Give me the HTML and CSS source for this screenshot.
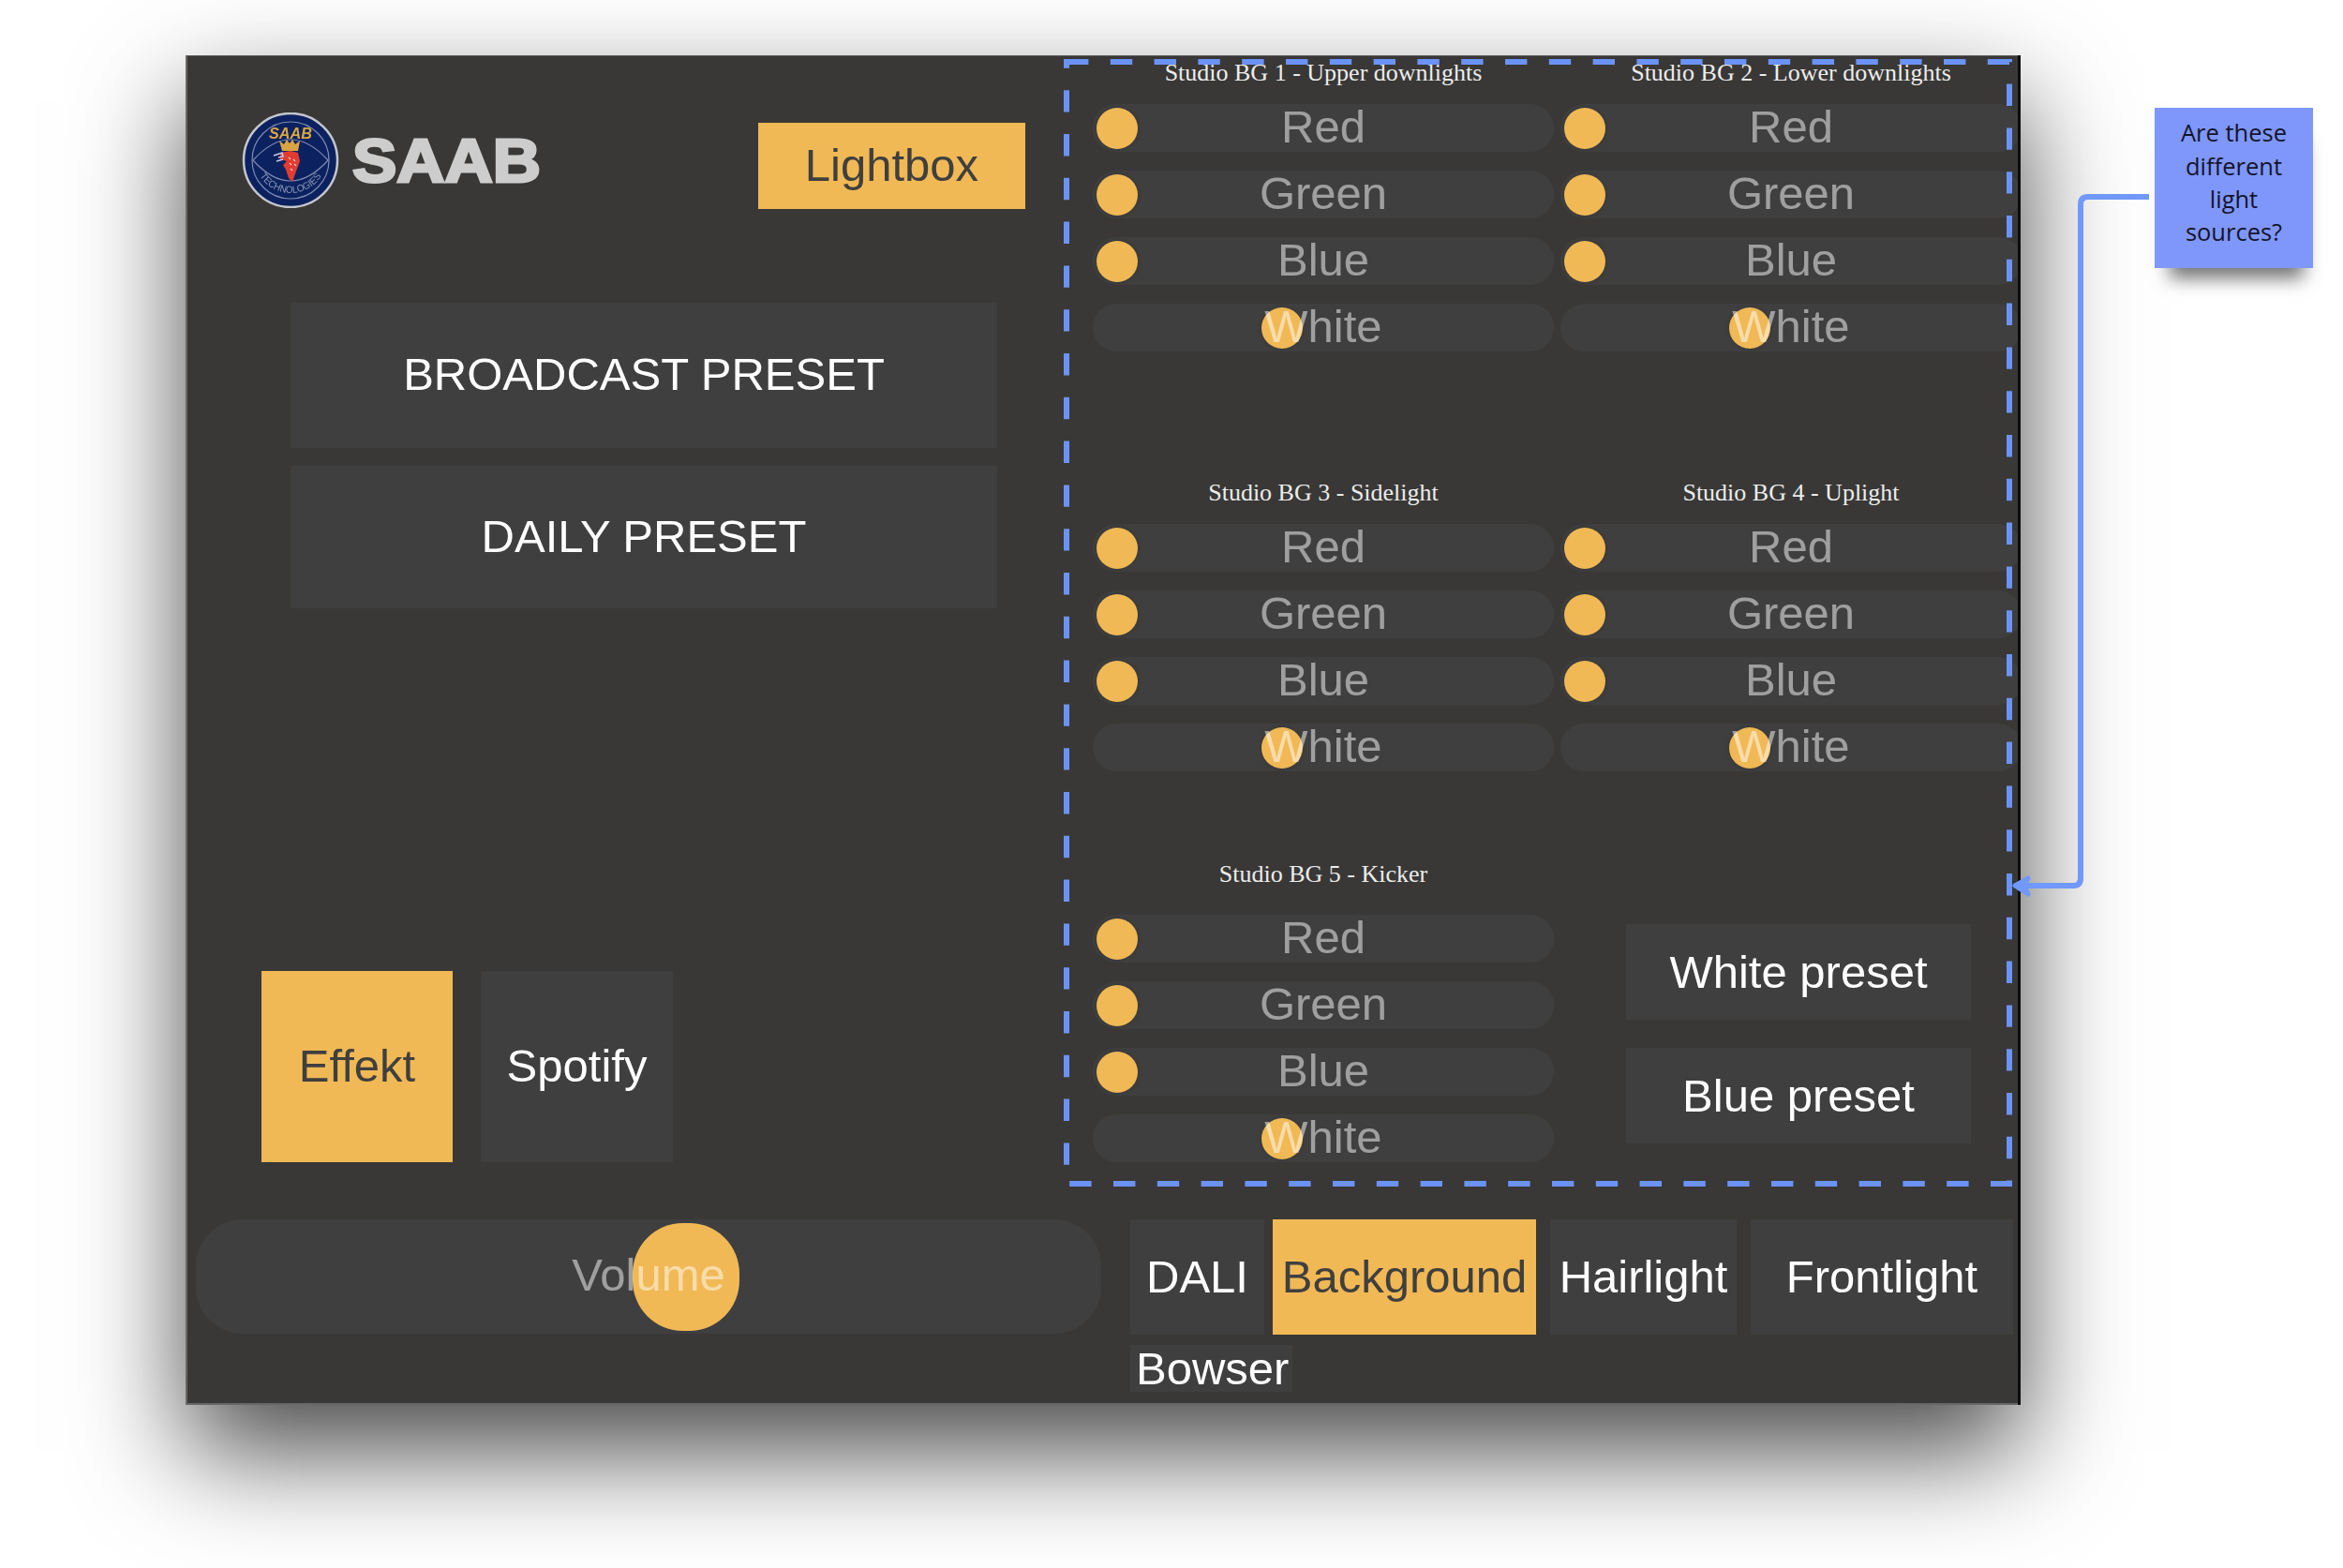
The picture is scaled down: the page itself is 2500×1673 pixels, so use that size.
FILE: index.html
```html
<!DOCTYPE html>
<html lang="en">
<head>
<meta charset="utf-8">
<title>Lightbox control panel</title>
<link rel="stylesheet" href="styles.css">
</head>
<body>
<main class="page">
  <section class="panel">
    <div class="main">
      <div class="left">
        <div class="brand">
          <svg class="logo" viewBox="0 0 320 102" role="img" aria-label="SAAB">
            <defs>
              <path id="arc-bottom" d="M18 66 A39 39 0 0 0 86 66"/>
            </defs>
            <circle cx="52" cy="51" r="50" fill="#0c2260" stroke="#c4c6cc" stroke-width="2.5"/>
            <circle cx="52" cy="51" r="41" fill="none" stroke="#7f8bb0" stroke-width="1.2"/>
            <path d="M12 51 Q52 7 92 51 Q52 95 12 51Z" fill="none" stroke="#7f8bb0" stroke-width="1.2"/>
            <text class="logo-badge" x="52" y="28" text-anchor="middle" textLength="46" lengthAdjust="spacingAndGlyphs">SAAB</text>
            <path d="M40 30 L45 34 L48 29 L51 33 L54 29 L57 34 L62 30 L60 41 L43 41Z" fill="#d9a441"/>
            <path d="M41 43 L52 41 L60 43 L62 52 L59 60 L54 74 L50 70 L47 61 L44 56 L48 52 L41 50Z" fill="#e23b32"/>
            <path d="M34 46 L43 43 L44 47 L39 48 M37 52 L44 50" fill="none" stroke="#c3cbe4" stroke-width="1.6"/>
            <path d="M50 48 l2 2 M55 50 l2 2 M51 54 l2 2 M56 55 l2 2 M52 60 l2 2" stroke="#f5c9c4" stroke-width="1.2"/>
            <text class="logo-tech"><textPath href="#arc-bottom" startOffset="50%" text-anchor="middle" textLength="78" lengthAdjust="spacingAndGlyphs">TECHNOLOGIES</textPath></text>
            <text class="logo-word" x="118" y="74" textLength="201" lengthAdjust="spacingAndGlyphs">SAAB</text>
          </svg>
          <button class="btn btn-active lightbox">Lightbox</button>
        </div>
        <div class="presets">
          <button class="btn preset-broadcast">BROADCAST PRESET</button>
          <button class="btn preset-daily">DAILY PRESET</button>
        </div>
        <div class="modes">
          <button class="btn btn-active mode">Effekt</button>
          <button class="btn mode mode-wide">Spotify</button>
        </div>
      </div>

      <div class="fixtures">
        <div class="group">
          <h2 class="group-title">Studio BG 1 - Upper downlights</h2>
          <div class="rows">
            <div class="slider"><span class="knob"></span><span class="label">Red</span></div>
            <div class="slider"><span class="knob"></span><span class="label">Green</span></div>
            <div class="slider"><span class="knob"></span><span class="label">Blue</span></div>
            <div class="slider"><span class="knob knob-mid"></span><span class="label">White</span></div>
          </div>
        </div>
        <div class="group">
          <h2 class="group-title">Studio BG 2 - Lower downlights</h2>
          <div class="rows">
            <div class="slider"><span class="knob"></span><span class="label">Red</span></div>
            <div class="slider"><span class="knob"></span><span class="label">Green</span></div>
            <div class="slider"><span class="knob"></span><span class="label">Blue</span></div>
            <div class="slider"><span class="knob knob-mid"></span><span class="label">White</span></div>
          </div>
        </div>
        <div class="group">
          <h2 class="group-title">Studio BG 3 - Sidelight</h2>
          <div class="rows">
            <div class="slider"><span class="knob"></span><span class="label">Red</span></div>
            <div class="slider"><span class="knob"></span><span class="label">Green</span></div>
            <div class="slider"><span class="knob"></span><span class="label">Blue</span></div>
            <div class="slider"><span class="knob knob-mid"></span><span class="label">White</span></div>
          </div>
        </div>
        <div class="group">
          <h2 class="group-title">Studio BG 4 - Uplight</h2>
          <div class="rows">
            <div class="slider"><span class="knob"></span><span class="label">Red</span></div>
            <div class="slider"><span class="knob"></span><span class="label">Green</span></div>
            <div class="slider"><span class="knob"></span><span class="label">Blue</span></div>
            <div class="slider"><span class="knob knob-mid"></span><span class="label">White</span></div>
          </div>
        </div>
        <div class="group">
          <h2 class="group-title group-title-tall">Studio BG 5 - Kicker</h2>
          <div class="rows">
            <div class="slider"><span class="knob"></span><span class="label">Red</span></div>
            <div class="slider"><span class="knob"></span><span class="label">Green</span></div>
            <div class="slider"><span class="knob"></span><span class="label">Blue</span></div>
            <div class="slider"><span class="knob knob-mid"></span><span class="label">White</span></div>
          </div>
        </div>
        <div class="color-presets">
          <button class="btn color-preset">White preset</button>
          <button class="btn color-preset">Blue preset</button>
        </div>
      </div>
    </div>

    <div class="bottom">
      <div class="volume"><span class="volume-knob"></span><span class="label label-volume">Volume</span></div>
      <div class="tabs-wrap">
        <div class="tabs">
          <button class="btn tab tab-dali">DALI</button>
          <button class="btn btn-active tab tab-background">Background</button>
          <button class="btn tab tab-hairlight">Hairlight</button>
          <button class="btn tab tab-frontlight">Frontlight</button>
        </div>
        <button class="btn bowser">Bowser</button>
      </div>
    </div>
  </section>

  <svg class="annotations" viewBox="0 0 2500 1673" aria-hidden="true">
    <rect class="dash-box" x="1138" y="66" width="1006" height="1197"/>
    <path class="connector" d="M2293 210 H2228 Q2220 210 2220 218 V937 Q2220 945 2212 945 H2152"/>
    <path class="connector-head" d="M2164 937 L2150 945 L2164 954 L2160 945Z"/>
  </svg>

  <aside class="note">Are these different light sources?</aside>
</main>
</body>
</html>
```
FILE: styles.css
```css
* { box-sizing: border-box; }
html, body { margin: 0; background: #fff; }

.page {
  position: relative;
  width: 2500px;
  height: 1673px;
  padding: 59px 0 0 198px;
  overflow: hidden;
  font-family: "Liberation Sans", Arial, sans-serif;
}

.panel {
  width: 1958px;
  height: 1440px;
  background: #393836;
  border-right: 3px solid #0d0d0d;
  box-shadow:
    inset 2px 0 0 #666,
    inset 0 -2px 0 #666,
    inset 0 1px 0 #5a5a5a,
    0 50px 108px rgba(0, 0, 0, 0.71);
  overflow: hidden;
}

.main { display: flex; height: 1242px; }

.left { width: 968px; flex: none; }

.brand {
  display: flex;
  align-items: flex-start;
  gap: 231px;
  padding: 61px 0 0 60px;
}
.logo { width: 320px; height: 102px; flex: none; filter: blur(0.5px); }
.logo-badge { font: italic bold 17px "Liberation Sans", sans-serif; fill: #dba63f; }
.logo-tech { font: 10.5px "Liberation Sans", sans-serif; fill: #8a98b8; }
.logo-word {
  font: bold 65px "Liberation Sans", sans-serif;
  fill: #cdcdcd;
  stroke: #cdcdcd;
  stroke-width: 3px;
}

.btn {
  display: block;
  margin: 0;
  padding: 0;
  border: 0;
  border-radius: 0;
  background: #3f3f3f;
  color: #fff;
  font: 49px/1 "Liberation Sans", Arial, sans-serif;
  text-align: center;
}
.btn-active { background: #f0b955; color: #3f3f3f; }

.lightbox { width: 285px; height: 92px; margin-top: 11px; padding-bottom: 2px; flex: none; }

.presets {
  display: flex;
  flex-direction: column;
  gap: 19px;
  width: 754px;
  margin: 100px 0 0 112px;
}
.preset-broadcast { height: 155px; padding-bottom: 3px; }
.preset-daily { height: 152px; padding-bottom: 2px; }

.modes { display: flex; gap: 30px; margin: 387px 0 0 81px; }
.mode { width: 204px; height: 204px; padding-bottom: 2px; }
.mode-wide { width: 205px; }

.fixtures {
  display: grid;
  grid-template-columns: 492px 492px;
  grid-template-rows: 448px 407px 1fr;
  column-gap: 7px;
  width: 991px;
  flex: none;
  padding-top: 5px;
}

.group-title {
  height: 47px;
  margin: 0;
  color: #ececec;
  font: normal 26px/28px "Liberation Serif", "Times New Roman", serif;
  text-align: center;
}
.group-title-tall { height: 57px; }

.rows { display: flex; flex-direction: column; gap: 20px; }

.slider {
  position: relative;
  display: flex;
  align-items: center;
  justify-content: center;
  height: 51px;
  border-radius: 25px;
  background: #3f3f3f;
}

.label {
  position: relative;
  margin-bottom: 3px;
  color: rgba(255, 255, 255, 0.5);
  font-size: 49px;
  line-height: 1;
}
.label-volume { margin-bottom: 4px; }

.knob {
  position: absolute;
  top: 4px;
  left: 4px;
  width: 44px;
  height: 44px;
  border-radius: 50%;
  background: #f0b955;
  box-shadow: 0 0 4px rgba(0, 0, 0, 0.18);
}
.knob-mid { left: 180px; }

.color-presets {
  display: flex;
  flex-direction: column;
  gap: 30px;
  width: 368px;
  margin: 67px 0 0 70px;
}
.color-preset { height: 102px; }

.bottom { display: flex; align-items: flex-start; padding-left: 11px; }

.volume {
  position: relative;
  display: flex;
  align-items: center;
  justify-content: center;
  width: 966px;
  height: 122px;
  flex: none;
  border-radius: 50px;
  background: #3f3f3f;
}
.volume-knob {
  position: absolute;
  top: 4px;
  left: 466px;
  width: 114px;
  height: 115px;
  border-radius: 47%;
  background: #f0b955;
}

.tabs-wrap { margin-left: 31px; }
.tabs { display: flex; height: 123px; }
.tab { height: 123px; flex: none; }
.tab-dali { width: 143px; margin-right: 9px; }
.tab-background { width: 281px; margin-right: 15px; }
.tab-hairlight { width: 199px; margin-right: 15px; }
.tab-frontlight { width: 280px; }

.bowser {
  width: 173px;
  height: 50px;
  margin-top: 11px;
  padding-left: 6px;
  text-align: left;
}

.annotations {
  position: absolute;
  top: 0;
  left: 0;
  width: 2500px;
  height: 1673px;
  pointer-events: none;
}
.dash-box {
  fill: none;
  stroke: #6b93f5;
  stroke-width: 6;
  stroke-dasharray: 23.4 23.4;
}
.connector {
  fill: none;
  stroke: #7198fb;
  stroke-width: 6;
}
.connector-head {
  fill: #7198fb;
  stroke: #7198fb;
  stroke-width: 5;
  stroke-linejoin: round;
}

.note {
  position: absolute;
  top: 115px;
  left: 2299px;
  display: flex;
  align-items: center;
  width: 169px;
  height: 171px;
  padding: 0 20px 11px;
  background: #7f97fb;
  box-shadow: 3px 24px 18px -13px rgba(0, 0, 0, 0.55);
  color: #14142b;
  font: 25.5px/35.3px "Open Sans", sans-serif;
  text-align: center;
}
```
